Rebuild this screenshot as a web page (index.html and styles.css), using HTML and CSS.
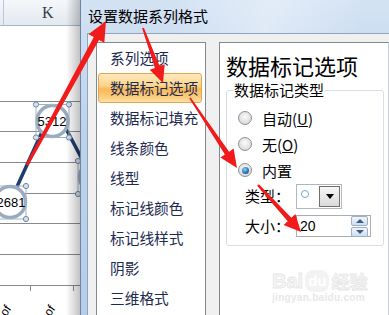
FILE: index.html
```html
<!DOCTYPE html>
<html lang="zh-CN">
<head>
  <meta charset="UTF-8">
  <meta name="viewport" content="width=device-width,initial-scale=1.0">
  <title>设置数据系列格式</title>
  <link rel="stylesheet" href="styles.css">
</head>
<body>
  <div class="sheet">
    <div class="sheet-head"><span class="cell-edge"></span><span class="col-k">K</span></div>
    <svg class="chart" width="80" height="290" viewBox="0 25 80 290">
      <g stroke="#8a8a8a" stroke-width="1">
        <line x1="0" y1="100.5" x2="80" y2="100.5"/>
        <line x1="0" y1="130.5" x2="80" y2="130.5"/>
        <line x1="0" y1="161.5" x2="80" y2="161.5"/>
        <line x1="0" y1="192.5" x2="80" y2="192.5"/>
        <line x1="0" y1="222.5" x2="80" y2="222.5"/>
        <line x1="0" y1="253.5" x2="80" y2="253.5"/>
        <line x1="0" y1="284.5" x2="80" y2="284.5"/>
        <line x1="30.5" y1="284" x2="30.5" y2="290"/>
        <line x1="73.5" y1="284" x2="73.5" y2="290"/>
      </g>
      <g stroke="#1f3d6c" stroke-width="3.5" fill="none">
        <line x1="10" y1="201" x2="47" y2="120"/>
        <line x1="64" y1="124" x2="82" y2="158"/>
      </g>
      <g fill="#fff" stroke="#9aabbf" stroke-width="3.5">
        <circle cx="52.5" cy="120" r="15.5"/>
        <circle cx="10" cy="201" r="15.5"/>
        <circle cx="95" cy="176" r="15.5"/>
      </g>
      <g fill="none" stroke="#a3b3c6" stroke-width="1">
        <rect x="36" y="103.5" width="33" height="33"/>
        <rect x="-7" y="185" width="33" height="33"/>
        <line x1="78" y1="160" x2="78" y2="193"/>
      </g>
      <g fill="#d6e1ee" stroke="#6f89a8" stroke-width="1">
        <circle cx="36" cy="103.5" r="2.6"/>
        <circle cx="69" cy="103.5" r="2.6"/>
        <circle cx="36" cy="136.5" r="2.6"/>
        <circle cx="69" cy="136.5" r="2.6"/>
        <circle cx="26" cy="185" r="2.6"/>
        <circle cx="26" cy="218" r="2.6"/>
        <circle cx="78" cy="160" r="2.6"/>
        <circle cx="78" cy="193" r="2.6"/>
      </g>
      <g class="chart-label">
        <text x="52" y="125" text-anchor="middle">5312</text>
        <text x="11" y="206" text-anchor="middle">2681</text>
      </g>
      <g class="axis-label">
        <text transform="translate(6 316) rotate(-55)">of</text>
        <text transform="translate(50 316) rotate(-55)">of</text>
      </g>
    </svg>
  </div>

  <div class="dialog">
    <div class="titlebar">设置数据系列格式</div>
    <div class="dialog-body">
      <ul class="nav">
        <li class="nav-item">系列选项</li>
        <li class="nav-item active">数据标记选项</li>
        <li class="nav-item">数据标记填充</li>
        <li class="nav-item">线条颜色</li>
        <li class="nav-item">线型</li>
        <li class="nav-item">标记线颜色</li>
        <li class="nav-item">标记线样式</li>
        <li class="nav-item">阴影</li>
        <li class="nav-item">三维格式</li>
      </ul>
      <div class="pane">
        <h2 class="pane-title">数据标记选项</h2>
        <fieldset class="group">
          <legend>数据标记类型</legend>
          <div class="radio-row"><span class="radio"></span><span>自动(<u>U</u>)</span></div>
          <div class="radio-row"><span class="radio"></span><span>无(<u>O</u>)</span></div>
          <div class="radio-row"><span class="radio checked"></span><span>内置</span></div>
          <div class="field-row type-row">
            <span class="field-label">类型：</span>
            <span class="combo">
              <span class="combo-value"><span class="marker"></span></span>
              <span class="combo-btn"></span>
            </span>
          </div>
          <div class="field-row size-row">
            <span class="field-label">大小：</span>
            <span class="spin">
              <span class="spin-value">20</span>
              <span class="spin-btns"><span class="spin-up"></span><span class="spin-down"></span></span>
            </span>
          </div>
        </fieldset>
        <div class="watermark">
          <div class="wm-logo"><span>Bai</span><span class="wm-du">du</span><span>经验</span></div>
          <div class="wm-url">jingyan.baidu.com</div>
        </div>
      </div>
    </div>
  </div>

  <svg class="arrows" width="389" height="315" viewBox="0 0 389 315">
    <g fill="#f21b1b">
      <polygon points="25.7,164.3 93.8,37.1 88.5,34.2 106,21 104.3,42.8 99,39.9 28.3,165.7"/>
      <polygon points="142.1,28.3 154.9,67.9 149.7,69.7 163,83 164.7,64.3 159.6,66.1 143.9,27.7"/>
      <polygon points="189.3,98.4 224.9,154.5 220.4,157.6 237,168 233.6,148.6 229.1,151.7 190.7,97.6"/>
      <polygon points="257.1,185.8 287.7,221.2 283.6,224.9 301,232 295.4,214.1 291.4,217.8 258.9,184.2"/>
    </g>
  </svg>
</body>
</html>
```

FILE: styles.css
```css
html,body
{
  margin:0;
  padding:0;
}
body
{
  width:389px;
  height:315px;
  overflow:hidden;
  position:relative;
  display:flex;
  background-color:#fff;
  font-family:"Noto Sans CJK SC",sans-serif;
}
.sheet
{
  width:80px;
  flex:none;
  position:relative;
  background-color:#fff;
  overflow:hidden;
}
.sheet::after
{
  content:"";
  position:absolute;
  top:0;
  right:0;
  width:14px;
  height:100%;
  background:linear-gradient(to right,rgba(0,0,0,0),rgba(0,0,0,0.24));
}
.sheet-head
{
  height:25px;
  display:flex;
  border-bottom:1px solid #a4b8cc;
  background:linear-gradient(#f5f7fa,#e4e9f0);
}
.cell-edge
{
  width:3px;
  border-right:1px solid #b9c8d8;
}
.col-k
{
  padding-left:38px;
  font:16px/25px "Liberation Serif",serif;
  color:#3a3f48;
}
.chart
{
  display:block;
}
.chart-label text
{
  font:13px "Liberation Sans",Arial,sans-serif;
  fill:#000;
}
.axis-label text
{
  font:12px "Liberation Sans",Arial,sans-serif;
  fill:#000;
}
.dialog
{
  flex:1;
  display:flex;
  flex-direction:column;
  border-left:1px solid #6b85a3;
  background:linear-gradient(#d4e3f4,#bed2ea 40%,#b7cde7);
}
.titlebar
{
  height:33px;
  flex:none;
  padding-left:7px;
  font-size:15px;
  line-height:31px;
  color:#000;
  background:linear-gradient(100deg,rgba(255,255,255,0) 30%,rgba(255,255,255,0.35) 60%,rgba(255,255,255,0) 90%);
}
.dialog-body
{
  flex:1;
  margin-left:6px;
  padding:8px 0 0 8px;
  display:flex;
  gap:13px;
  background-color:#f0f0f0;
  border-top:1px solid #8fa5bf;
  border-left:1px solid #8fa5bf;
}
.nav
{
  width:110px;
  flex:none;
  box-sizing:border-box;
  margin:0;
  padding:0 3px 0 1px;
  list-style:none;
  background-color:#fff;
  border:1px solid #828790;
  border-bottom:none;
}
.nav-item
{
  height:30px;
  box-sizing:border-box;
  padding-left:11px;
  border:1px solid transparent;
  border-radius:3px;
  font-size:14.7px;
  line-height:28px;
  color:#1e2b4f;
  white-space:nowrap;
}
.nav-item.active
{
  border-color:#e3a64c;
  background:linear-gradient(#fde9bd,#fcd58f 40%,#f9b95a 55%,#fbcf80 85%,#fde2a6);
}
.pane
{
  flex:1;
  box-sizing:border-box;
  padding:9px 4px 0 6px;
  background-color:#fff;
  border:1px solid #828790;
  border-right-color:#c9cdd2;
  border-bottom:none;
}
.pane-title
{
  margin:0;
  font-size:22px;
  font-weight:normal;
  line-height:26px;
  color:#000;
}
.group
{
  margin:3px 0 0 0;
  padding:0 0 8px 0;
  border:1px solid #d5dfe5;
  border-radius:3px;
}
.group legend
{
  margin-left:6px;
  padding:0 1px;
  font-size:15px;
  line-height:18px;
  color:#000;
}
.radio-row
{
  height:26px;
  display:flex;
  align-items:center;
  gap:10px;
  padding-left:11px;
  font-size:15px;
  color:#000;
}
.radio-row:first-of-type
{
  margin-top:6px;
}
.radio
{
  width:12px;
  height:12px;
  border:1px solid #8e9094;
  border-radius:50%;
  background:radial-gradient(circle at 50% 40%,#fbfbfb,#dcdcdc 70%,#cfcfcf);
  display:flex;
  align-items:center;
  justify-content:center;
}
.radio.checked::after
{
  content:"";
  width:7px;
  height:7px;
  border-radius:50%;
  background:radial-gradient(circle at 40% 35%,#8fd2f5,#2a79b4 55%,#13406b);
}
.field-row
{
  display:flex;
  align-items:center;
  padding-left:18px;
  font-size:15px;
  color:#000;
}
.type-row
{
  height:26px;
}
.size-row
{
  height:22px;
  margin-top:6px;
}
.field-label
{
  width:51px;
  flex:none;
  line-height:20px;
}
.combo
{
  width:46px;
  height:25px;
  box-sizing:border-box;
  display:flex;
  border:1px solid #b3b6ba;
  background-color:#fff;
}
.combo-value
{
  flex:1;
  padding:5px 0 0 4px;
}
.marker
{
  display:block;
  width:6px;
  height:6px;
  border:1.5px solid #7aa6d2;
  border-radius:50%;
}
.combo-btn
{
  width:21px;
  margin:1px 1px 1px 0;
  box-sizing:border-box;
  border:1px solid #6f6f6f;
  background:linear-gradient(#f6f6f6,#dadada);
  display:flex;
  align-items:center;
  justify-content:center;
}
.combo-btn::after
{
  content:"";
  border-left:4px solid transparent;
  border-right:4px solid transparent;
  border-top:5px solid #000;
}
.spin
{
  width:75px;
  height:22px;
  box-sizing:border-box;
  display:flex;
  align-items:center;
  border:1px solid #abadb3;
  background-color:#fff;
}
.spin-value
{
  flex:1;
  padding-left:3px;
  font:14px "Liberation Sans",Arial,sans-serif;
}
.spin-btns
{
  width:17px;
  margin-right:2px;
  display:flex;
  flex-direction:column;
  gap:1px;
}
.spin-up,.spin-down
{
  height:8px;
  border:1px solid #9cb1c9;
  border-radius:2px;
  background:linear-gradient(#f1f6fc,#cfdef0);
  display:flex;
  align-items:center;
  justify-content:center;
}
.spin-up::after
{
  content:"";
  border-left:4px solid transparent;
  border-right:4px solid transparent;
  border-bottom:4px solid #3d5a86;
}
.spin-down::after
{
  content:"";
  border-left:4px solid transparent;
  border-right:4px solid transparent;
  border-top:4px solid #3d5a86;
}
.watermark
{
  margin:24px 0 0 46px;
  color:#f7f7f7;
}
.wm-logo
{
  display:flex;
  align-items:flex-end;
  gap:2px;
  font:bold 20px/22px "Liberation Sans",sans-serif;
  -webkit-text-stroke:0.8px #e6e6e6;
}
.wm-logo span:last-child
{
  font-family:"Noto Sans CJK SC",sans-serif;
  font-size:18px;
}
.wm-du
{
  font-size:15px;
  padding:0 3px;
  border-radius:8px;
  background-color:#f3f3f3;
  color:#fff;
  -webkit-text-stroke:0;
}
.wm-url
{
  font:bold 10px/12px "Liberation Sans",sans-serif;
  color:#e8e8e8;
  letter-spacing:0.3px;
}
.arrows
{
  position:absolute;
  top:0;
  left:0;
  pointer-events:none;
}
```
